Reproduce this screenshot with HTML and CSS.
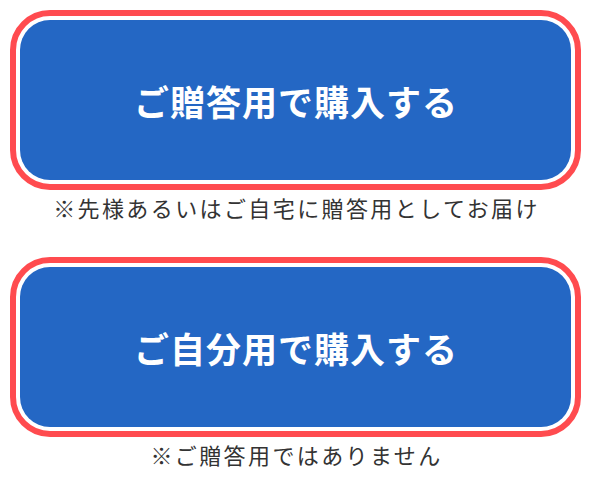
FILE: index.html
```html
<!DOCTYPE html>
<html lang="ja">
<head>
<meta charset="utf-8">
<title>購入ボタン</title>
<link rel="stylesheet" href="styles.css">
</head>
<body>
<div class="wrap">
  <div class="item">
    <a class="btn" href="#"><span class="btn-inner">ご贈答用で購入する</span></a>
    <p class="note">※先様あるいはご自宅に贈答用としてお届け</p>
  </div>
  <div class="item">
    <a class="btn" href="#"><span class="btn-inner">ご自分用で購入する</span></a>
    <p class="note">※ご贈答用ではありません</p>
  </div>
</div>
</body>
</html>
```
FILE: styles.css
```css
html, body {
  margin: 0;
  padding: 0;
  background: #ffffff;
}
body {
  font-family: "Noto Sans CJK JP", "Noto Sans", sans-serif;
}
.wrap {
  padding: 10px 9px 0 10px;
  display: flex;
  flex-direction: column;
  gap: 34px;
}
.item {
  display: flex;
  flex-direction: column;
}
.btn {
  display: block;
  text-decoration: none;
  border: 6px solid #ff4b4f;
  border-radius: 40px;
  background: #ffffff;
  padding: 4px;
}
.btn-inner {
  display: flex;
  align-items: center;
  justify-content: center;
  height: 160px;
  border-radius: 30px;
  background: #2467c4;
  color: #ffffff;
  font-size: 35px;
  font-weight: 700;
  letter-spacing: 1px;
  padding-left: 1px;
  padding-top: 1px;
  box-sizing: border-box;
}
.note {
  margin: 1px 0 0;
  text-align: center;
  font-size: 22px;
  line-height: 32px;
  letter-spacing: 2.4px;
  padding-left: 2px;
  color: #333333;
}
```
